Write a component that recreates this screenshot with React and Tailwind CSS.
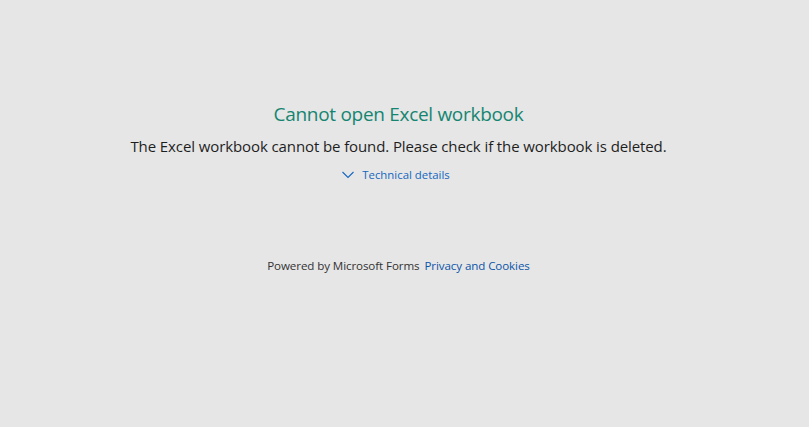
import React from 'react';

const font = { fontFamily: '"Segoe UI", "Open Sans", "Noto Sans", sans-serif' };

export default function App() {
  return (
    <div className="min-h-screen w-full bg-[#e6e6e6] flex flex-col items-center pt-[101px] pr-[12px]" style={font}>
      <h1 className="text-[19px] leading-[26px] tracking-[-0.3px] text-[#158571] font-normal">Cannot open Excel workbook</h1>
      <p className="mt-[9px] text-[15px] leading-[20px] tracking-[-0.1px] text-[#1e1e1e]">
        The Excel workbook cannot be found. Please check if the workbook is deleted.
      </p>
      <button className="mt-[11px] mr-[5px] flex items-center gap-[8px] text-[11.4px] leading-[16px] text-[#1467c0] cursor-pointer">
        <svg width="12" height="8" viewBox="0 0 12 8" fill="none" stroke="currentColor" strokeWidth="1.1">
          <path d="M0.5 1 L6 6.5 L11.5 1" />
        </svg>
        Technical details
      </button>
      <div className="mt-[75px] flex items-center gap-[5px] text-[11.6px] leading-[16px] tracking-[-0.1px]">
        <span className="text-[#333333]">Powered by Microsoft Forms</span>
        <a className="text-[#0b55a8]" href="#">Privacy and Cookies</a>
      </div>
    </div>
  );
}
